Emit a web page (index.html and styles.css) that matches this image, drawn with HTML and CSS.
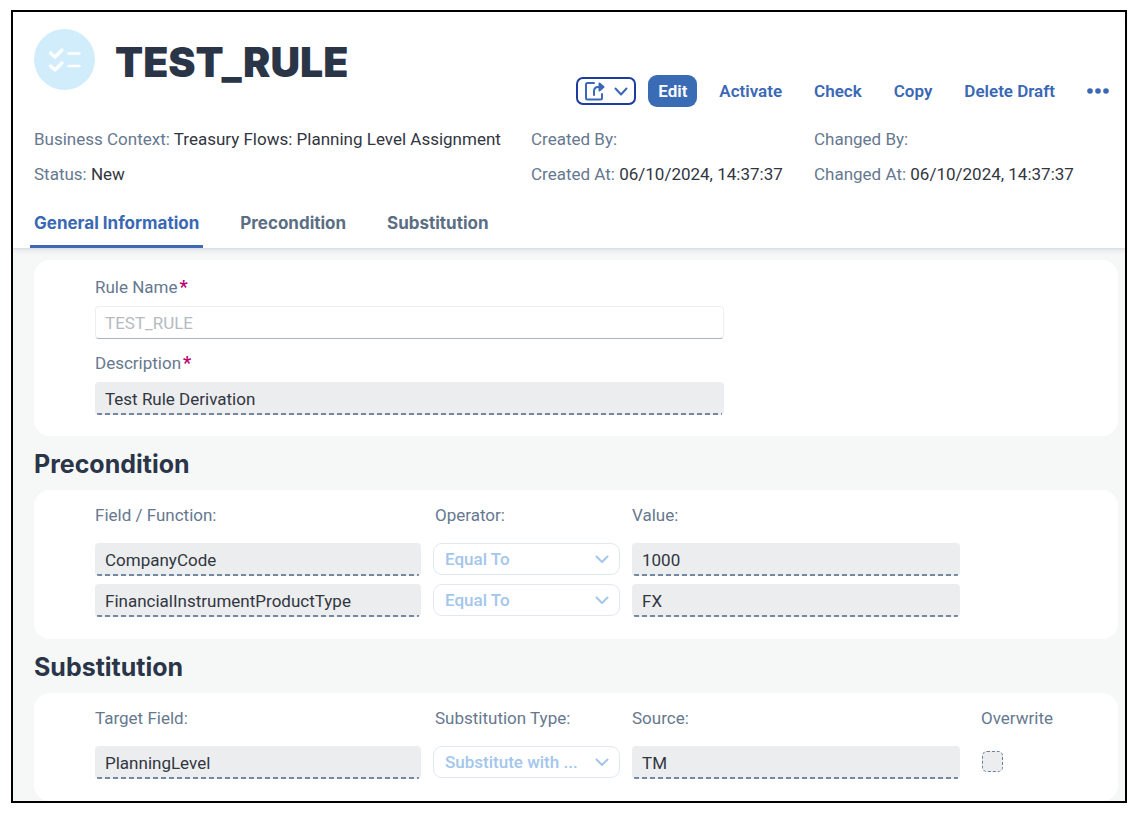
FILE: index.html
```html
<!DOCTYPE html>
<html lang="en">
<head>
<meta charset="utf-8">
<title>TEST_RULE</title>
<link rel="stylesheet" href="styles.css">
</head>
<body>
<div class="page">
  <header class="header">
    <div class="header-top">
      <div class="identity">
        <span class="avatar">
          <svg width="61" height="61" viewBox="0 0 61 61" fill="none" stroke="#fff" stroke-width="3.200" stroke-linecap="round" stroke-linejoin="round" aria-hidden="true">
            <path d="M16.500 24l4.500 4 7-7M16.500 37l4.500 4 7-7"/>
            <path d="M34.500 24.500h11M34.500 37h11" stroke-width="2.500"/>
          </svg>
        </span>
        <h1 class="title">TEST_RULE</h1>
      </div>
      <div class="actions">
        <button class="btn btn-share" type="button" aria-label="Share">
          <svg width="22" height="22" viewBox="0 0 22 22" fill="none" stroke="#3a68b4" stroke-width="2" stroke-linecap="round" stroke-linejoin="round" aria-hidden="true">
            <path d="M10 3H3.500Q2 3 2 4.500V18Q2 19.500 3.500 19.500H16.500Q18 19.500 18 18V14"/>
            <path d="M10 15V11.500Q10 7 14 7H18M15.500 3.500L19.500 7l-4 3.500z"/>
          </svg>
          <svg width="14" height="9" viewBox="0 0 14 9" fill="none" stroke="#3a68b4" stroke-width="2" stroke-linecap="round" stroke-linejoin="round" aria-hidden="true"><path d="M1.500 1.500L7 7.500l5.500-6"/></svg>
        </button>
        <button class="btn btn-primary" type="button">Edit</button>
        <button class="btn" type="button">Activate</button>
        <button class="btn" type="button">Check</button>
        <button class="btn" type="button">Copy</button>
        <button class="btn" type="button">Delete Draft</button>
        <button class="btn" type="button" aria-label="More">
          <svg width="22" height="6" viewBox="0 0 22 6" fill="#3a68b4" aria-hidden="true"><circle cx="3" cy="3" r="2.800"/><circle cx="11" cy="3" r="2.800"/><circle cx="19" cy="3" r="2.800"/></svg>
        </button>
      </div>
    </div>
    <div class="facts">
      <div class="fact"><span class="key">Business Context:</span> Treasury Flows: Planning Level Assignment</div>
      <div class="fact"><span class="key">Created By:</span></div>
      <div class="fact"><span class="key">Changed By:</span></div>
      <div class="fact"><span class="key">Status:</span> New</div>
      <div class="fact"><span class="key">Created At:</span> 06/10/2024, 14:37:37</div>
      <div class="fact"><span class="key">Changed At:</span> 06/10/2024, 14:37:37</div>
    </div>
    <nav class="tabs">
      <a class="tab tab-active" href="#general">General Information</a>
      <a class="tab" href="#precondition">Precondition</a>
      <a class="tab" href="#substitution">Substitution</a>
    </nav>
  </header>
  <main class="content">
    <section class="card card-general" id="general">
      <label class="label" for="rule-name">Rule Name<span class="required">*</span></label>
      <input class="field field-disabled" id="rule-name" value="TEST_RULE" disabled>
      <label class="label" for="description">Description<span class="required">*</span></label>
      <input class="field" id="description" value="Test Rule Derivation" readonly>
    </section>

    <h2 class="heading" id="precondition">Precondition</h2>
    <section class="card grid">
      <span class="label" id="l-field">Field / Function:</span>
      <span class="label label-select" id="l-op">Operator:</span>
      <span class="label label-wide" id="l-value">Value:</span>
      <input class="field" aria-labelledby="l-field" value="CompanyCode" readonly>
      <div class="select"><select aria-labelledby="l-op" disabled><option>Equal To</option></select>
        <svg width="14" height="9" viewBox="0 0 14 9" fill="none" stroke="#a3c6ec" stroke-width="2" stroke-linecap="round" stroke-linejoin="round" aria-hidden="true"><path d="M1.500 1.500L7 7l5.500-5.500"/></svg></div>
      <input class="field" aria-labelledby="l-value" value="1000" readonly>
      <span></span>
      <input class="field" aria-labelledby="l-field" value="FinancialInstrumentProductType" readonly>
      <div class="select"><select aria-labelledby="l-op" disabled><option>Equal To</option></select>
        <svg width="14" height="9" viewBox="0 0 14 9" fill="none" stroke="#a3c6ec" stroke-width="2" stroke-linecap="round" stroke-linejoin="round" aria-hidden="true"><path d="M1.500 1.500L7 7l5.500-5.500"/></svg></div>
      <input class="field" aria-labelledby="l-value" value="FX" readonly>
    </section>

    <h2 class="heading" id="substitution">Substitution</h2>
    <section class="card grid">
      <span class="label" id="l-target">Target Field:</span>
      <span class="label label-select" id="l-type">Substitution Type:</span>
      <span class="label" id="l-source">Source:</span>
      <label class="label label-check" for="overwrite">Overwrite</label>
      <input class="field" aria-labelledby="l-target" value="PlanningLevel" readonly>
      <div class="select"><select aria-labelledby="l-type" disabled><option>Substitute with ...</option></select>
        <svg width="14" height="9" viewBox="0 0 14 9" fill="none" stroke="#a3c6ec" stroke-width="2" stroke-linecap="round" stroke-linejoin="round" aria-hidden="true"><path d="M1.500 1.500L7 7l5.500-5.500"/></svg></div>
      <input class="field" aria-labelledby="l-source" value="TM" readonly>
      <input class="check" type="checkbox" id="overwrite" disabled>
    </section>
  </main>
</div>
</body>
</html>
```
FILE: styles.css
```css
* { box-sizing: border-box; }

body {
  margin: 0;
  padding: 10px 12px 12px 11px;
  background: #fff;
  color: #32363f;
  font: 17px/24px Roboto, "Liberation Sans", sans-serif;
}

input, select, button { font: inherit; margin: 0; }

.page { border: 2px solid #000; background: #f6f8f8; }

/* Header */
.header {
  position: relative;
  background: #fff;
  border-bottom: 1px solid #dcdfe3;
  box-shadow: 0 2px 4px rgba(34, 53, 72, 0.1);
}
.header-top {
  display: flex;
  justify-content: space-between;
  align-items: flex-start;
  padding: 17px 6px 0 21px;
}
.identity { display: flex; align-items: center; gap: 20px; }
.avatar { display: flex; border-radius: 50%; background: #d1edfc; }
.title {
  margin: 0;
  padding-top: 4px;
  font: 900 41px/44px Inter, "Liberation Sans", sans-serif;
  color: #2b3548;
}
.actions { display: flex; align-items: center; gap: 12px; padding-top: 46px; }
.btn {
  display: flex;
  align-items: center;
  height: 32px;
  padding: 0 10px;
  border: 0;
  border-radius: 9px;
  background: none;
  color: #3a68b4;
  font-weight: 600;
  white-space: nowrap;
}
.btn-primary { background: #3a6cb6; color: #fff; }
.btn-share { height: 28px; gap: 8px; padding: 0 6px; border: 2px solid #1e3c9c; border-radius: 7px; }

.facts {
  display: grid;
  grid-template-columns: 497fr 283fr 311fr;
  padding: 15px 0 0 21px;
}
.fact { line-height: 35px; white-space: nowrap; }
.key { color: #667890; }

.tabs { display: flex; gap: 33px; padding: 19px 17px 0; font-family: Inter, "Liberation Sans", sans-serif; }
.tab {
  padding: 0 4px 10px;
  border-bottom: 3px solid transparent;
  color: #5c6e84;
  font-weight: 700;
  text-decoration: none;
}
.tab-active { color: #3a68b4; border-color: #3f69b5; }

/* Content */
.content { padding: 11px 7px 0 21px; }
.card { border-radius: 16px; background: #fff; padding: 13px 0 22px 61px; }
.heading {
  margin: 0;
  padding: 14px 0 12px;
  font: 700 25px/28px Inter, "Liberation Sans", sans-serif;
  color: #2b3548;
}
.card-general { display: flex; flex-direction: column; padding-top: 15px; padding-bottom: 21px; }
.card-general .label { padding-bottom: 7px; }
.card-general .field { width: 61.5%; }
.card-general .field-disabled { margin-bottom: 12px; }
.label { color: #667890; }
.required { padding-left: 2px; color: #ba066c; font-size: 18px; font-weight: 700; }

.field {
  width: 100%;
  min-width: 0;
  height: 33px;
  padding: 0 10px;
  border: 0;
  border-radius: 4px;
  outline: 0;
  color: #32363f;
  background:
    repeating-linear-gradient(90deg, #7488a2 0 5px, transparent 5px 8px) 2px 100% / calc(100% - 4px) 2px no-repeat,
    #ebedef;
}
.field-disabled {
  background: #fff;
  border: 1px solid #eceef0;
  border-bottom: 1px solid #a9b6c6;
  padding: 0 9px;
  color: #b5bac2;
}

.grid {
  display: grid;
  grid-template-columns: 326fr 187fr 328fr 146fr;
  column-gap: 12px;
  row-gap: 8px;
}
.grid .label { padding-bottom: 8px; }
.grid .label-select { padding-left: 2px; }
.grid .label-check { padding-left: 9px; }
.label-wide { grid-column: span 2; }

.select { position: relative; }
.select select {
  appearance: none;
  display: block;
  width: 100%;
  height: 32px;
  padding: 0 34px 0 11px;
  border: 1px solid #e2e8f0;
  border-radius: 9px;
  background: #fff;
  color: #a3c6ec;
  font-weight: 500;
  opacity: 1;
}
.select svg { position: absolute; right: 11px; top: 12px; pointer-events: none; }

.check {
  appearance: none;
  width: 21px;
  height: 21px;
  margin: 5px 0 0 10px;
  border: 1px dashed #6b809b;
  border-radius: 5px;
  background: #ebedef;
}
```
